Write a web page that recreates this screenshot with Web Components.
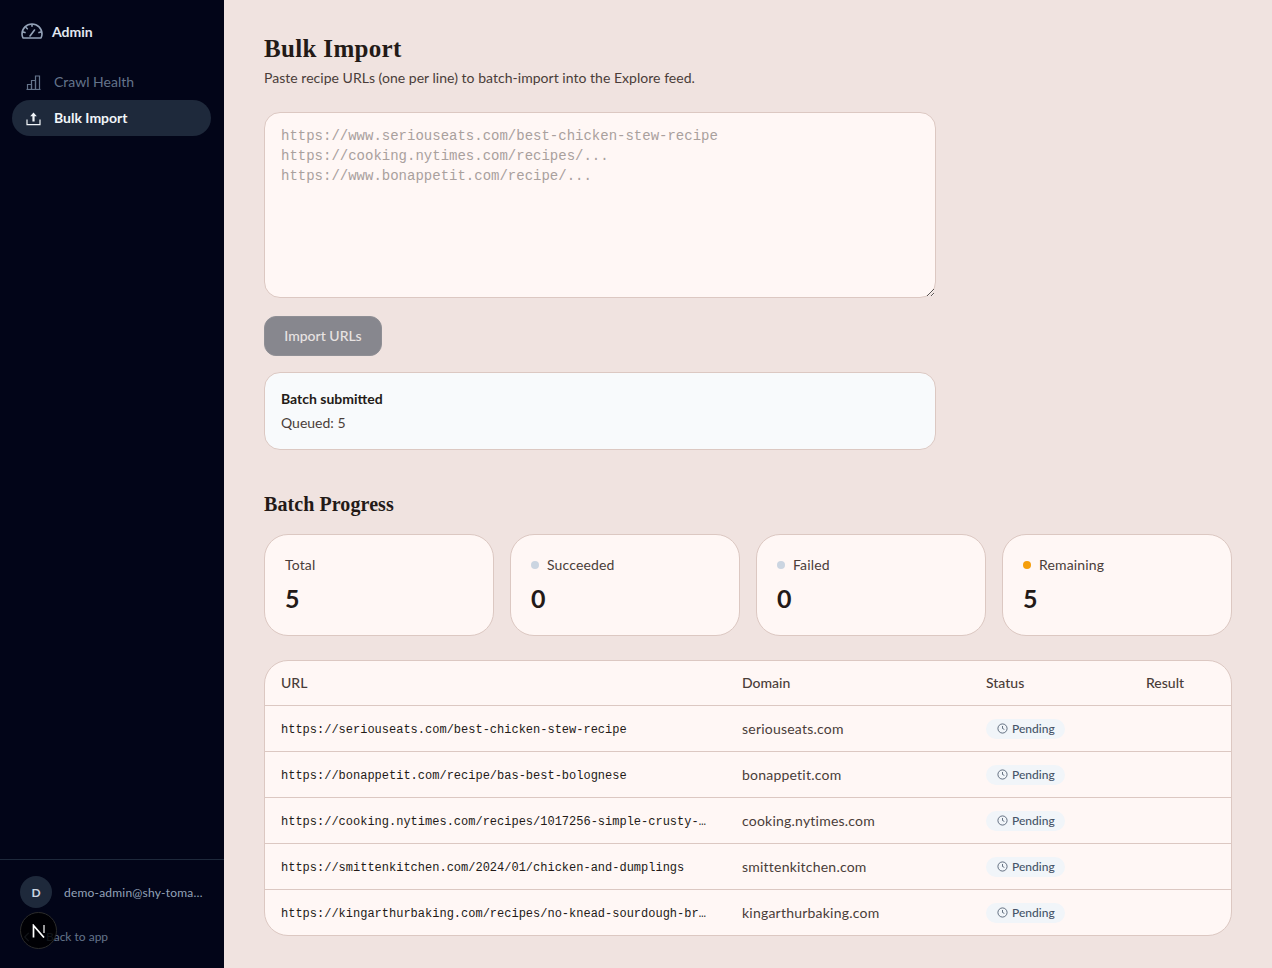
<!DOCTYPE html>
<html lang="en">
<head>
<meta charset="utf-8">
<title>Bulk Import</title>
<style>
  html, body { margin: 0; height: 100%; }
  body {
    background: #f0e3e0;
    color: #231a17;
    font-family: "Lato", "Noto Sans", sans-serif;
  }
</style>
</head>
<body>
<admin-shell>
  <admin-sidebar slot="side" email="demo-admin@shy-toma…">
    <nav-item icon="chart" label="Crawl Health"></nav-item>
    <nav-item icon="upload" label="Bulk Import" active></nav-item>
  </admin-sidebar>
  <page-head title="Bulk Import" sub="Paste recipe URLs (one per line) to batch-import into the Explore feed."></page-head>
  <url-form></url-form>
  <batch-notice queued="5"></batch-notice>
  <batch-progress></batch-progress>
</admin-shell>

<script>
const ICONS = {
  chart: `<path d="M.5 14.5h14"/><path d="M1.5 14.5v-5h4v5"/><path d="M5.5 14.5v-9h4v9"/><path d="M9.5 14.5V1h4v13.5"/>`,
  upload: `<path d="M1 8.5v5.2h13V8.5"/><path d="M7.5 10.5V4" stroke-width="2.2"/><path d="M4.2 5.2 7.5 1.5l3.3 3.7z" fill="currentColor" stroke="none"/>`,
  clock: `<circle cx="12" cy="12" r="10"/><path d="M12 6.5V12l4 2"/>`
}

class AdminShell extends HTMLElement {
  constructor () {
    super()
    this.attachShadow({ mode: 'open' }).innerHTML = `
      <style>
        :host { display: flex; min-height: 968px; }
        main {
          flex: 1 1 auto;
          min-width: 0;
          padding: 32px 40px;
          box-sizing: border-box;
        }
      </style>
      <slot name="side"></slot>
      <main><slot></slot></main>
    `
  }
}

class AdminSidebar extends HTMLElement {
  constructor () {
    super()
    this.attachShadow({ mode: 'open' })
  }

  connectedCallback () {
    const email = this.getAttribute('email')
    this.shadowRoot.innerHTML = `
      <style>
        :host {
          display: flex;
          flex: 0 0 224px;
          flex-direction: column;
          box-sizing: border-box;
          width: 224px;
          background: #020518;
          position: relative;
        }
        .brand {
          display: flex;
          align-items: center;
          gap: 9px;
          padding: 21px 21px 0;
          height: 20px;
          color: #e2e8f0;
          font-size: 14px;
          font-weight: 700;
        }
        .brand svg { color: #94a3b8; flex: none; }
        nav {
          display: flex;
          flex-direction: column;
          flex: 1 1 auto;
          padding: 23px 13px 0 12px;
        }
        footer {
          border-top: 1px solid #1e293b;
          padding: 16px 20px 0;
          height: 92px;
        }
        .user {
          display: flex;
          align-items: center;
          gap: 12px;
        }
        .avatar {
          flex: 0 0 32px;
          height: 32px;
          border-radius: 50%;
          background: #1e293b;
          color: #cbd5e1;
          display: grid;
          place-items: center;
          font-size: 12px;
          font-weight: 700;
        }
        .email {
          color: #94a3b8;
          font-size: 12px;
          letter-spacing: .2px;
          white-space: nowrap;
        }
        .back {
          display: flex;
          align-items: center;
          gap: 12px;
          margin-top: 21px;
          color: #64748b;
          font-size: 12px;
          line-height: 16px;
        }
        .dev {
          position: absolute;
          left: 20px;
          top: 912px;
          width: 37px;
          height: 37px;
          box-sizing: border-box;
          border-radius: 50%;
          background: rgba(0, 0, 0, .82);
          border: 1px solid #2b2b2b;
          display: grid;
          place-items: center;
        }
      </style>
      <div class="brand">
        <svg width="22" height="16" viewBox="0 0 22 16" fill="none" stroke="currentColor" stroke-width="1.6" stroke-linecap="round" stroke-linejoin="round">
          <path d="M2 15C1.3 13.6 1 12.4 1 11a10 10 0 0 1 20 0c0 1.4-.3 2.6-1 4z"/>
          <path d="M9 13l4.5-6"/>
          <path d="M11 1.5v1.8M2 9l2 .6M20 9l-2 .6M5 4.5l1.3 1.3"/>
        </svg>
        <span>Admin</span>
      </div>
      <nav><slot></slot></nav>
      <footer>
        <div class="user">
          <div class="avatar">D</div>
          <div class="email">${email}</div>
        </div>
        <div class="back">
          <svg width="14" height="14" viewBox="0 0 24 24" fill="none" stroke="currentColor" stroke-width="2"><path d="M15 5l-7 7 7 7"/></svg>
          <span>Back to app</span>
        </div>
      </footer>
      <div class="dev">
        <svg width="14" height="14" viewBox="0 0 14 14" fill="none" stroke="#fff" stroke-width="1.7"><path d="M1.5 13.5V1.5L12 13.5"/><path d="M12 1v8" stroke-opacity=".7"/></svg>
      </div>
    `
  }
}

class NavItem extends HTMLElement {
  constructor () {
    super()
    this.attachShadow({ mode: 'open' })
  }

  connectedCallback () {
    const icon = ICONS[this.getAttribute('icon')]
    this.shadowRoot.innerHTML = `
      <style>
        :host {
          display: flex;
          align-items: center;
          gap: 13px;
          height: 36px;
          padding: 0 14px;
          border-radius: 18px;
          color: #64748b;
          font-size: 14px;
        }
        :host([active]) {
          background: #1e293b;
          color: #f1f5f9;
          font-weight: 700;
        }
        svg { flex: none; }
        span { margin-bottom: 2px; }
      </style>
      <svg width="15" height="15" viewBox="0 0 15 15" fill="none" stroke="currentColor" stroke-width="1.2">${icon}</svg>
      <span>${this.getAttribute('label')}</span>
    `
  }
}

class PageHead extends HTMLElement {
  constructor () {
    super()
    this.attachShadow({ mode: 'open' })
  }

  connectedCallback () {
    this.shadowRoot.innerHTML = `
      <style>
        :host { display: block; }
        h1 {
          margin: 0;
          padding-top: 1px;
          font: 700 25px/32px "Liberation Serif", serif;
          letter-spacing: .33px;
          color: #231a17;
        }
        p {
          margin: 3px 0 0;
          font-size: 14px;
          line-height: 20px;
          color: #4a3d39;
          letter-spacing: .03px;
        }
      </style>
      <h1>${this.getAttribute('title')}</h1>
      <p>${this.getAttribute('sub')}</p>
    `
  }
}

class UrlForm extends HTMLElement {
  constructor () {
    super()
    const placeholder = [
      'https://www.seriouseats.com/best-chicken-stew-recipe',
      'https://cooking.nytimes.com/recipes/...',
      'https://www.bonappetit.com/recipe/...'
    ].join('\n')
    this.attachShadow({ mode: 'open' }).innerHTML = `
      <style>
        :host { display: block; margin-top: 24px; max-width: 672px; }
        textarea {
          display: block;
          width: 100%;
          height: 186px;
          box-sizing: border-box;
          padding: 13px 16px 11px;
          background: #fff7f5;
          border: 1px solid #dcc8c2;
          border-radius: 16px;
          font: 14px/20px "Liberation Mono", monospace;
          color: #231a17;
          outline: none;
        }
        textarea::placeholder { color: #a9a09d; opacity: 1; }
        button {
          display: block;
          margin-top: 18px;
          height: 40px;
          width: 118px;
          padding: 0 0 2px;
          background: #87878e;
          border: 1px solid #8f8f95;
          border-radius: 12px;
          color: #e8e3e2;
          font: 500 14px "Lato", "Noto Sans", sans-serif;
        }
      </style>
      <textarea placeholder="${placeholder}"></textarea>
      <button type="button">Import URLs</button>
    `
  }
}

class BatchNotice extends HTMLElement {
  constructor () {
    super()
    this.attachShadow({ mode: 'open' })
  }

  connectedCallback () {
    this.shadowRoot.innerHTML = `
      <style>
        :host {
          display: block;
          box-sizing: border-box;
          max-width: 672px;
          height: 78px;
          margin-top: 16px;
          padding: 16px;
          background: #f8fafc;
          border: 1px solid #dcc8c2;
          border-radius: 16px;
          font-size: 14px;
          line-height: 20px;
        }
        strong { display: block; color: #231a17; }
        span { display: block; margin-top: 4px; color: #4a3d39; }
      </style>
      <strong>Batch submitted</strong>
      <span>Queued: ${this.getAttribute('queued')}</span>
    `
  }
}

class StatCard extends HTMLElement {
  constructor () {
    super()
    this.attachShadow({ mode: 'open' })
  }

  connectedCallback () {
    const dot = this.getAttribute('dot')
    this.shadowRoot.innerHTML = `
      <style>
        :host {
          display: block;
          box-sizing: border-box;
          height: 102px;
          padding: 20px;
          background: #fff7f5;
          border: 1px solid #dcc8c2;
          border-radius: 24px;
        }
        .label {
          display: flex;
          align-items: center;
          gap: 8px;
          font-size: 14px;
          line-height: 20px;
          letter-spacing: .15px;
          color: #4a3d39;
        }
        i { width: 8px; height: 8px; border-radius: 50%; }
        .value {
          margin-top: 7px;
          font-size: 25px;
          line-height: 32px;
          font-weight: 700;
          color: #231a17;
        }
      </style>
      <div class="label">${dot ? `<i style="background:${dot}"></i>` : ''}<span>${this.getAttribute('label')}</span></div>
      <div class="value">${this.getAttribute('value')}</div>
    `
  }
}

class StatusPill extends HTMLElement {
  constructor () {
    super()
    this.attachShadow({ mode: 'open' }).innerHTML = `
      <style>
        :host {
          display: inline-flex;
          align-items: center;
          gap: 4px;
          height: 20px;
          padding: 0 10px 0 11px;
          border-radius: 10px;
          background: #f1f5f9;
          color: #475569;
          font-size: 12px;
          font-weight: 500;
        }
        svg { margin-top: -1px; }
      </style>
      <svg width="11" height="11" viewBox="0 0 24 24" fill="none" stroke="currentColor" stroke-width="1.8">${ICONS.clock}</svg>
      <slot></slot>
    `
  }
}

class BatchTable extends HTMLElement {
  constructor () {
    super()
    const rows = [
      ['https://seriouseats.com/best-chicken-stew-recipe', 'seriouseats.com'],
      ['https://bonappetit.com/recipe/bas-best-bolognese', 'bonappetit.com'],
      ['https://cooking.nytimes.com/recipes/1017256-simple-crusty-…', 'cooking.nytimes.com'],
      ['https://smittenkitchen.com/2024/01/chicken-and-dumplings', 'smittenkitchen.com'],
      ['https://kingarthurbaking.com/recipes/no-knead-sourdough-br…', 'kingarthurbaking.com']
    ]
    this.attachShadow({ mode: 'open' }).innerHTML = `
      <style>
        :host {
          display: block;
          margin-top: 24px;
          background: #fff7f5;
          border: 1px solid #dcc8c2;
          border-radius: 24px;
          overflow: hidden;
        }
        .row {
          display: grid;
          grid-template-columns: 461px 244px 160px 1fr;
          align-items: center;
          height: 46px;
          box-sizing: border-box;
          border-top: 1px solid #dcc8c2;
          font-size: 14px;
          color: #4a3d39;
        }
        .row.head { height: 44px; padding-bottom: 2px; border-top: 0; font-weight: 500; }
        .row > div { padding: 0 16px; min-width: 0; }
        .row > .url {
          font: 12px "Liberation Mono", monospace;
          color: #231a17;
          white-space: nowrap;
          padding: 2px 0 0 16px;
        }
        .domain { letter-spacing: .22px; }
      </style>
      <div class="row head"><div>URL</div><div>Domain</div><div>Status</div><div>Result</div></div>
      ${rows.map(r => `
        <div class="row">
          <div class="url">${r[0]}</div>
          <div class="domain">${r[1]}</div>
          <div><status-pill>Pending</status-pill></div>
          <div></div>
        </div>
      `).join('')}
    `
  }
}

class BatchProgress extends HTMLElement {
  constructor () {
    super()
    this.attachShadow({ mode: 'open' }).innerHTML = `
      <style>
        :host { display: block; margin-top: 40px; }
        h2 {
          margin: 0 0 16px;
          font: 700 20px/28px "Liberation Serif", serif;
          letter-spacing: .08px;
          color: #231a17;
        }
        .stats {
          display: grid;
          grid-template-columns: repeat(4, 1fr);
          gap: 16px;
        }
      </style>
      <h2>Batch Progress</h2>
      <div class="stats">
        <stat-card label="Total" value="5"></stat-card>
        <stat-card label="Succeeded" value="0" dot="#cbd5e1"></stat-card>
        <stat-card label="Failed" value="0" dot="#cbd5e1"></stat-card>
        <stat-card label="Remaining" value="5" dot="#f59e0b"></stat-card>
      </div>
      <batch-table></batch-table>
    `
  }
}

customElements.define('admin-shell', AdminShell)
customElements.define('admin-sidebar', AdminSidebar)
customElements.define('nav-item', NavItem)
customElements.define('page-head', PageHead)
customElements.define('url-form', UrlForm)
customElements.define('batch-notice', BatchNotice)
customElements.define('stat-card', StatCard)
customElements.define('status-pill', StatusPill)
customElements.define('batch-table', BatchTable)
customElements.define('batch-progress', BatchProgress)
</script>
</body>
</html>
